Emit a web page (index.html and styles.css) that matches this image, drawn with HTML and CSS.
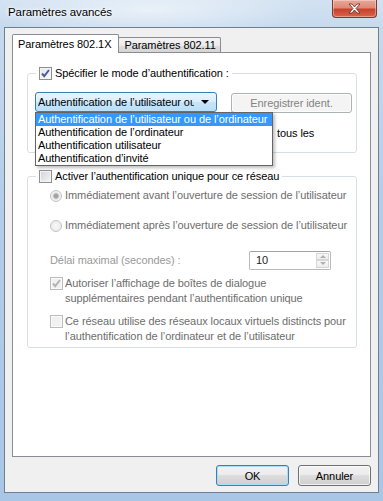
FILE: index.html
```html
<!DOCTYPE html>
<html lang="fr">
<head>
  <meta charset="UTF-8" />
  <title>Paramètres avancés</title>
  <link rel="stylesheet" href="styles.css">
</head>
<body>
  <div class="window">
    <!-- Title bar -->
    <div class="titlebar">
      <span class="title">Paramètres avancés</span>
      <span class="close-btn">
        <svg width="13" height="11" viewBox="0 0 13 11">
          <path d="M1 1h3l2.5 3 2.5-3h3l-4 4.5 4 4.5h-3l-2.5-3-2.5 3h-3l4-4.5z" fill="#fff" stroke="#5a2a22" stroke-width="0.8" stroke-linejoin="round"/>
        </svg>
      </span>
    </div>

    <!-- Client area -->
    <div class="client">
      <div class="tabs">
        <div class="tab active">Paramètres 802.1X</div>
        <div class="tab">Paramètres 802.11</div>
      </div>

      <div class="tab-panel">
        <!-- Authentication mode -->
        <fieldset class="group group-auth">
          <legend>
            <label class="check">
              <span class="box checked">
                <svg width="11" height="11" viewBox="0 0 11 11"><path d="M2 5.5l2.2 2.6L9 2" fill="none" stroke="#4a5f97" stroke-width="2"/></svg>
              </span>
              Spécifier le mode d’authentification :
            </label>
          </legend>
          <div class="auth-row">
            <div class="combo-wrap">
              <div class="combo">
                <span class="combo-text">Authentification de l’utilisateur ou de l’ordinateur</span>
                <span class="combo-arrow"></span>
              </div>
              <ul class="dropdown">
                <li class="selected">Authentification de l’utilisateur ou de l’ordinateur</li>
                <li>Authentification de l’ordinateur</li>
                <li>Authentification utilisateur</li>
                <li>Authentification d’invité</li>
              </ul>
            </div>
            <button class="btn btn-wide" disabled>Enregistrer ident.</button>
          </div>
          <p class="note"><span class="note-lead">Supprimer les informations d’identification pour</span>tous les</p>
        </fieldset>

        <!-- Single sign-on -->
        <fieldset class="group group-sso">
          <legend>
            <label class="check">
              <span class="box"></span>
              Activer l’authentification unique pour ce réseau
            </label>
          </legend>
          <div class="option option-first">
            <span class="radio on"></span>
            <span>Immédiatement avant l’ouverture de session de l’utilisateur</span>
          </div>
          <div class="option option-radio">
            <span class="radio"></span>
            <span>Immédiatement après l’ouverture de session de l’utilisateur</span>
          </div>
          <div class="delay-row">
            <span class="delay-label">Délai maximal (secondes) :</span>
            <div class="spin">
              <span class="spin-value">10</span>
              <span class="spin-buttons">
                <span class="spin-up"></span>
                <span class="spin-down"></span>
              </span>
            </div>
          </div>
          <div class="option option-check">
            <span class="box disabled">
              <svg width="11" height="11" viewBox="0 0 11 11"><path d="M2 5.5l2.2 2.6L9 2" fill="none" stroke="#b4b4b4" stroke-width="2"/></svg>
            </span>
            <span class="option-text">Autoriser l’affichage de boîtes de dialogue supplémentaires pendant l’authentification unique</span>
          </div>
          <div class="option option-check option-last">
            <span class="box disabled"></span>
            <span class="option-text option-text-wide">Ce réseau utilise des réseaux locaux virtuels distincts pour l’authentification de l’ordinateur et de l’utilisateur</span>
          </div>
        </fieldset>
      </div>

      <div class="actions">
        <button class="btn default">OK</button>
        <button class="btn">Annuler</button>
      </div>
    </div>
  </div>
</body>
</html>
```

FILE: styles.css
```css
/* Reset */
* {
  margin: 0;
  padding: 0;
  box-sizing: border-box;
}
body {
  font-family: "Liberation Sans", Arial, sans-serif;
  font-size: 11px;
  letter-spacing: -0.08px;
  color: #000;
  background: #b9d1ea;
}
/* Glass frame */
.window {
  width: 383px;
  height: 501px;
  padding: 0 4px 8px 4px;
  display: flex;
  flex-direction: column;
  background:
    radial-gradient(ellipse 160px 30px at 150px 10px, rgba(255,255,255,0.55), rgba(255,255,255,0)),
    linear-gradient(180deg, #d3e2f2 0, #c6daee 28px, #b4cde8 200px, #a9c6e6 100%);
}
.titlebar {
  height: 27px;
  display: flex;
  justify-content: space-between;
  align-items: flex-start;
}
.title {
  padding: 5px 0 0 4px;
  font-size: 11.5px;
  line-height: 14px;
  text-shadow: 0 0 5px #fff, 0 0 3px #fff;
}
.close-btn {
  width: 45px;
  height: 18px;
  margin-right: 2px;
  display: flex;
  align-items: center;
  justify-content: center;
  border: 1px solid #7a3a30;
  border-top: none;
  border-radius: 0 0 4px 4px;
  background: linear-gradient(180deg, #eaa797 0, #de8a77 45%, #c9412b 55%, #d8664d 100%);
  box-shadow: inset 0 0 0 1px rgba(255,255,255,0.35);
}
/* Client area */
.client {
  flex: 1;
  display: flex;
  flex-direction: column;
  background: #f0f0f0;
  border: 1px solid #6f7f91;
  padding: 6px 7px 6px 7px;
}
.tabs {
  display: flex;
  align-items: flex-end;
  margin-bottom: -1px;
}
.tab {
  height: 16px;
  padding: 0 4px 0 5px;
  line-height: 14px;
  border: 1px solid #898c95;
  border-bottom: none;
  border-radius: 2px 2px 0 0;
  margin-left: -1px;
  background: linear-gradient(180deg, #f3f3f3 0, #ebebeb 50%, #dedede 50%, #d4d4d4 100%);
}
.tab.active {
  position: relative;
  z-index: 2;
  height: 19px;
  margin-left: 0;
  padding: 2px 7px 0 5px;
  background: #fff;
}
.tab-panel {
  position: relative;
  z-index: 1;
  flex: 1;
  background: #fff;
  border: 1px solid #898c95;
  padding: 13px 13px 0 14px;
}
/* Group boxes */
.group {
  border: 1px solid #d5dfe5;
  border-radius: 3px;
  padding: 0 2px 11px 7px;
}
.group legend {
  margin-left: 1px;
  padding: 0 3px;
}
.check {
  display: flex;
  align-items: center;
  gap: 3px;
  line-height: 14px;
}
.box {
  width: 13px;
  height: 13px;
  flex-shrink: 0;
  display: flex;
  align-items: center;
  justify-content: center;
  border: 1px solid #8f8f8f;
  background: linear-gradient(135deg, #d0d3d8 0, #f6f6f6 100%);
  box-shadow: inset 0 0 0 1px #f4f4f4;
}
.box.checked {
  background: linear-gradient(135deg, #e4e6ea 0, #fbfbfb 100%);
}
.box.disabled {
  border-color: #bcbcbc;
  background: #f1f1f1;
  box-shadow: inset 0 0 0 1px #fafafa;
}
/* Authentication mode row */
.auth-row {
  display: flex;
  justify-content: space-between;
  align-items: flex-start;
  margin: 12px 2px 0 0;
}
.combo-wrap {
  position: relative;
  width: 182px;
}
.combo {
  height: 20px;
  display: flex;
  align-items: center;
  border: 1px solid #3c7fb1;
  border-radius: 3px;
  background: linear-gradient(180deg, #eaf5fd 0, #d9eefc 50%, #c6e5fa 50%, #bcdff6 100%);
  padding-left: 2px;
}
.combo-text {
  flex: 1;
  overflow: hidden;
  white-space: nowrap;
}
.combo-arrow {
  width: 22px;
  display: flex;
  justify-content: center;
}
.combo-arrow::before {
  content: "";
  border-left: 4px solid transparent;
  border-right: 4px solid transparent;
  border-top: 4px solid #000;
}
.dropdown {
  position: absolute;
  top: 20px;
  left: 0;
  width: 238px;
  z-index: 5;
  list-style: none;
  background: #fff;
  border: 1px solid #646464;
  box-shadow: 2px 2px 3px rgba(0,0,0,0.25);
}
.dropdown li {
  line-height: 13px;
  padding: 0 2px;
  white-space: nowrap;
}
.dropdown li.selected {
  background: #3399ff;
  color: #fff;
}
.note {
  margin-top: 13px;
  line-height: 15px;
  white-space: nowrap;
}
.note-lead {
  display: inline-block;
  width: 242px;
  overflow: hidden;
  vertical-align: top;
}
/* Single sign-on group */
.group-sso {
  margin-top: 16px;
  padding-bottom: 3px;
}
.option {
  display: flex;
  gap: 3px;
  margin-left: 15px;
  line-height: 15px;
  color: #6d6d6d;
}
.option-first {
  margin-top: 5px;
}
.option-radio {
  margin-top: 15px;
}
.option-check {
  margin-top: 6px;
  gap: 2px;
}
.option-text {
  flex-shrink: 0;
  width: 282px;
}
.option-text-wide {
  width: 287px;
}
.option-check .box {
  margin-top: 1px;
}
.option-last {
  margin-top: 8px;
}
.radio {
  width: 12px;
  height: 12px;
  margin-top: 2px;
  flex-shrink: 0;
  border-radius: 50%;
  border: 1px solid #c2c2c2;
  background: radial-gradient(circle, #f7f7f7 0, #e9e9e9 100%);
}
.radio.on {
  background: radial-gradient(circle, #9c9c9c 0, #a8a8a8 2px, #d8d8d8 3px, #f4f4f4 4px);
}
.delay-row {
  display: flex;
  align-items: center;
  height: 20px;
  margin: 17px 0 0 15px;
}
.delay-label {
  color: #9a9a9a;
}
.spin {
  width: 82px;
  height: 19px;
  margin: 0 23px 0 auto;
  display: flex;
  border: 1px solid #b6b9bf;
  border-top-color: #9fa2a8;
  border-radius: 2px;
  background: #fff;
}
.spin-value {
  flex: 1;
  padding-left: 6px;
  line-height: 17px;
  color: #222;
}
.spin-buttons {
  width: 15px;
  display: flex;
  flex-direction: column;
  padding: 1px;
}
.spin-up,
.spin-down {
  flex: 1;
  display: flex;
  align-items: center;
  justify-content: center;
  border: 1px solid #d6d6d6;
  background: linear-gradient(180deg, #f8f8f8, #ececec);
}
.spin-up::before {
  content: "";
  border-left: 3px solid transparent;
  border-right: 3px solid transparent;
  border-bottom: 3px solid #b0b0b0;
}
.spin-down::before {
  content: "";
  border-left: 3px solid transparent;
  border-right: 3px solid transparent;
  border-top: 3px solid #b0b0b0;
}
/* Buttons */
.btn {
  width: 73px;
  height: 21px;
  font-family: inherit;
  font-size: 11px;
  letter-spacing: inherit;
  color: #000;
  border: 1px solid #707070;
  border-radius: 3px;
  background: linear-gradient(180deg, #f2f2f2 0, #ebebeb 50%, #dddddd 50%, #cfcfcf 100%);
  box-shadow: inset 0 0 0 1px rgba(255,255,255,0.7);
}
.btn.default {
  border-color: #3c7fb1;
  box-shadow: inset 0 0 0 1px #a6e0f8;
}
.btn-wide {
  width: 121px;
  height: 20px;
  margin-top: 1px;
  color: #838383;
  border-color: #adb2b5;
  background: #f4f4f4;
  box-shadow: inset 0 0 0 1px #fcfcfc;
}
.actions {
  display: flex;
  justify-content: flex-end;
  gap: 9px;
  margin-top: 8px;
}
```
